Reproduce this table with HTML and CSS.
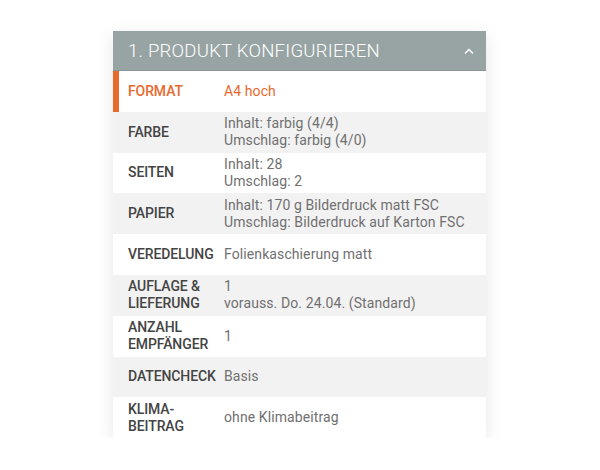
FILE: index.html
```html
<!DOCTYPE html>
<html lang="de">
<head>
<meta charset="utf-8">
<link rel="stylesheet" href="styles.css">
</head>
<body>
<div class="page">
  <section class="card">
    <header class="card-head">
      <h2 class="card-title">1. PRODUKT KONFIGURIEREN</h2>
      <svg class="chev" width="10" height="7" viewBox="0 0 10 7"><path d="M1 5.5 L5 1.5 L9 5.5" fill="none" stroke="#fff" stroke-width="1.4"/></svg>
    </header>
    <div class="row active">
      <div class="label">FORMAT</div>
      <div class="value">A4 hoch</div>
    </div>
    <div class="row alt">
      <div class="label">FARBE</div>
      <div class="value">Inhalt: farbig (4/4)<br>Umschlag: farbig (4/0)</div>
    </div>
    <div class="row">
      <div class="label">SEITEN</div>
      <div class="value">Inhalt: 28<br>Umschlag: 2</div>
    </div>
    <div class="row alt">
      <div class="label">PAPIER</div>
      <div class="value">Inhalt: 170 g Bilderdruck matt FSC<br>Umschlag: Bilderdruck auf Karton FSC</div>
    </div>
    <div class="row">
      <div class="label">VEREDELUNG</div>
      <div class="value">Folienkaschierung matt</div>
    </div>
    <div class="row alt">
      <div class="label">AUFLAGE &amp;<br>LIEFERUNG</div>
      <div class="value">1<br>vorauss. Do. 24.04. (Standard)</div>
    </div>
    <div class="row">
      <div class="label">ANZAHL<br>EMPFÄNGER</div>
      <div class="value">1</div>
    </div>
    <div class="row alt">
      <div class="label">DATENCHECK</div>
      <div class="value">Basis</div>
    </div>
    <div class="row">
      <div class="label">KLIMA-<br>BEITRAG</div>
      <div class="value">ohne Klimabeitrag</div>
    </div>
  </section>
</div>
</body>
</html>
```
FILE: styles.css
```css
html, body {
  margin: 0;
  padding: 0;
  background: #ffffff;
}
.page {
  padding: 31px 0 0 113px;
  font-family: Roboto, "Liberation Sans", sans-serif;
}
.card {
  width: 373px;
  background: #fff;
  box-shadow: 0 4px 16px rgba(0, 0, 0, 0.1);
}
.card-head {
  height: 40px;
  box-sizing: border-box;
  background: #97a4a3;
  border-bottom: 1px solid #8a9796;
  display: flex;
  align-items: center;
  justify-content: space-between;
  padding: 0 12px 0 15px;
}
.card-title {
  margin: 0;
  font-size: 18.5px;
  font-weight: 300;
  color: #fff;
  letter-spacing: 0.25px;
}
.chev {
  display: block;
  margin-top: 1px;
}
.row {
  height: 40.8px;
  box-sizing: border-box;
  display: flex;
  align-items: center;
  padding-left: 15px;
  background: #fff;
}
.row.alt {
  background: #f2f2f2;
}
.row.active {
  box-shadow: inset 6px 0 0 #e8692d;
}
.label {
  width: 96px;
  flex: none;
  font-size: 14px;
  font-weight: 500;
  color: #444;
  line-height: 17px;
  letter-spacing: -0.1px;
}
.value {
  font-size: 14px;
  font-weight: 400;
  color: #707070;
  line-height: 17px;
  letter-spacing: 0.1px;
}
.row.active .label,
.row.active .value {
  color: #e8692d;
}
```
